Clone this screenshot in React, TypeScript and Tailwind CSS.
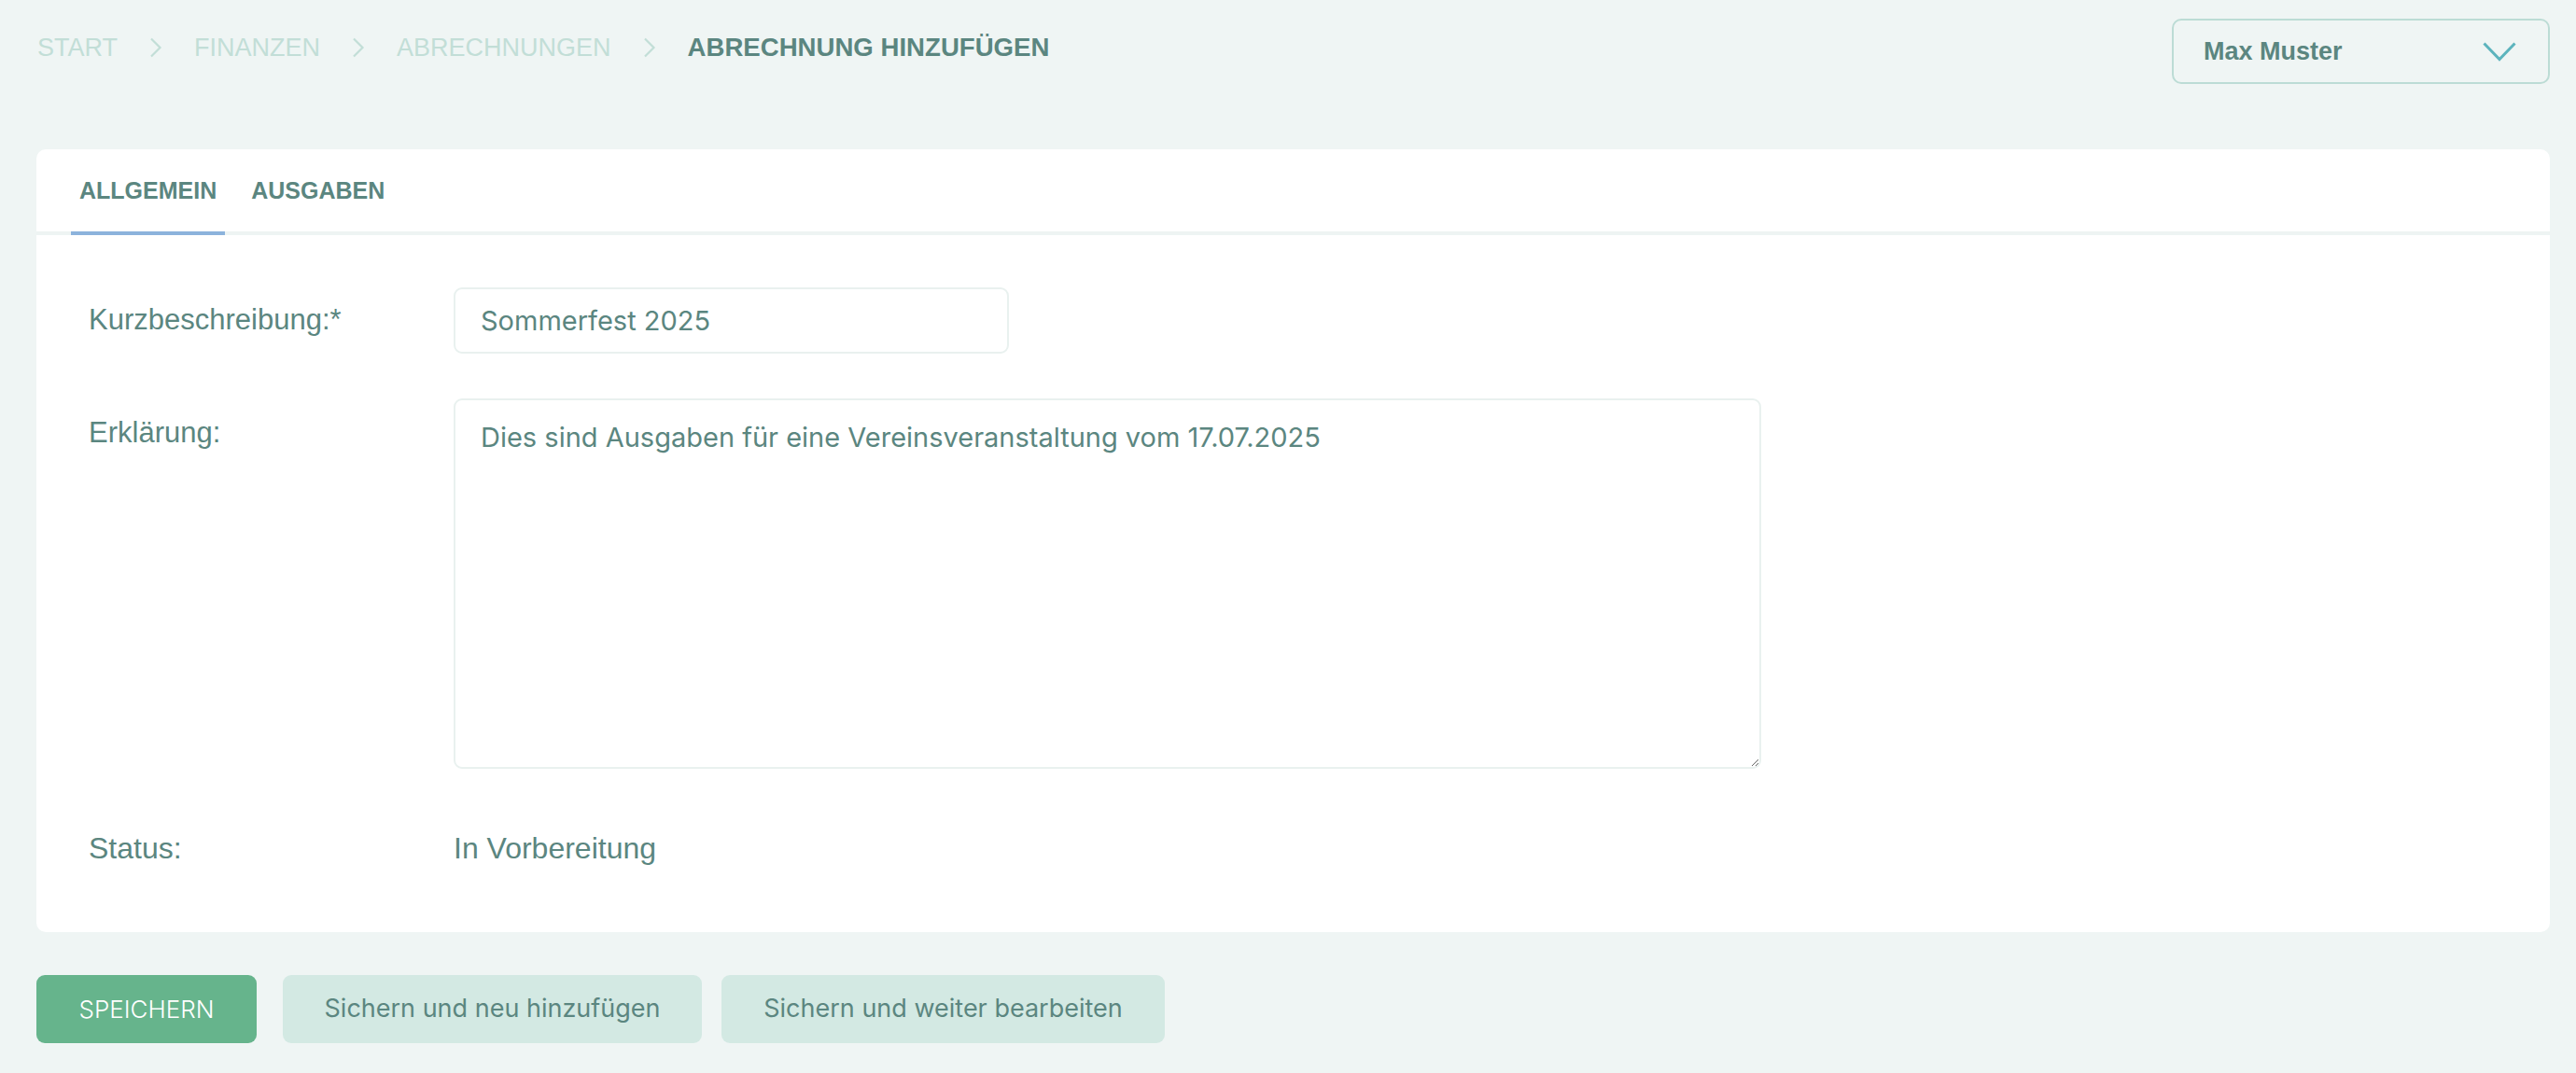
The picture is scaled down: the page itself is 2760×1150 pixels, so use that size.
import React from "react";

const crumbs = ["START", "FINANZEN", "ABRECHNUNGEN"];

const Chevron = () => (
  <svg width="14" height="22" viewBox="0 0 14 22" fill="none" className="shrink-0">
    <path d="M2 1.5 L11.5 11 L2 20.5" stroke="#c2ded7" strokeWidth="2.2" />
  </svg>
);

export default function App() {
  return (
    <div className="h-[1150px] overflow-hidden bg-[#eff5f4] pl-[39px] pr-[28px] pt-[20px] font-['Liberation_Sans',Arial,sans-serif] text-[#5b8680]">
      {/* top bar */}
      <div className="flex items-start justify-between">
        <nav className="mt-[14px] flex items-center gap-[34px] pl-px text-[27px] leading-[34px]">
          {crumbs.map((c) => (
            <React.Fragment key={c}>
              <span className="text-[#c2ded7]">{c}</span>
              <Chevron />
            </React.Fragment>
          ))}
          <span className="text-[27.6px] font-bold">ABRECHNUNG HINZUFÜGEN</span>
        </nav>
        <button className="flex h-[70px] w-[405px] items-center justify-between rounded-[10px] border-2 border-[#bcdcd5] pl-[32px] pr-[34px] text-[27px] font-bold">
          <span>Max Muster</span>
          <svg width="36" height="21" viewBox="0 0 36 21" fill="none">
            <path d="M1.5 1.5 L18 18.5 L34.5 1.5" stroke="#5cb4bd" strokeWidth="3" />
          </svg>
        </button>
      </div>

      {/* card */}
      <div className="mt-[70px] rounded-[10px] bg-white">
        <div className="flex h-[92px] gap-[19px] border-b-4 border-[#eef4f3] pl-[37px]">
          <div className="-mb-[4px] flex items-center border-b-4 border-[#8cb3dc] px-[9px] pt-[2px] text-[25px] font-bold">
            ALLGEMEIN
          </div>
          <div className="flex items-center px-[9px] pt-[2px] text-[25px] font-bold">AUSGABEN</div>
        </div>

        <div className="flex flex-col gap-[48px] px-[56px] pb-[70px] pt-[56px] text-[31px] leading-[40px]">
          <div className="flex items-start">
            <label className="w-[391px] shrink-0 pt-[15px]">Kurzbeschreibung:*</label>
            <input
              defaultValue="Sommerfest 2025"
              className="h-[71px] w-[595px] rounded-[9px] border-2 border-[#e9f1ef] px-[27px] font-['Inter',sans-serif] text-[29px] text-[#5b8680] outline-none"
            />
          </div>
          <div className="flex items-start">
            <label className="w-[391px] shrink-0 pt-[17px]">Erklärung:</label>
            <textarea
              defaultValue="Dies sind Ausgaben für eine Vereinsveranstaltung vom 17.07.2025"
              className="h-[397px] w-[1401px] rounded-[9px] border-2 border-[#e9f1ef] px-[27px] pt-[20px] font-['Inter',sans-serif] text-[29px] leading-[40px] text-[#5b8680] outline-none"
            />
          </div>
          <div className="flex items-start pt-[17px] text-[32px]">
            <span className="w-[391px] shrink-0">Status:</span>
            <span>In Vorbereitung</span>
          </div>
        </div>
      </div>

      {/* actions */}
      <div className="mt-[46px] flex font-['Inter',sans-serif]">
        <button className="h-[73px] w-[236px] rounded-[9px] bg-[#66b48c] text-[26px] font-light text-white">
          SPEICHERN
        </button>
        <button className="ml-[28px] h-[73px] w-[449px] rounded-[9px] bg-[#d3e9e3] text-[27px] text-[#5b8680]">
          Sichern und neu hinzufügen
        </button>
        <button className="ml-[21px] h-[73px] w-[475px] rounded-[9px] bg-[#d3e9e3] text-[27px] text-[#5b8680]">
          Sichern und weiter bearbeiten
        </button>
      </div>
    </div>
  );
}
